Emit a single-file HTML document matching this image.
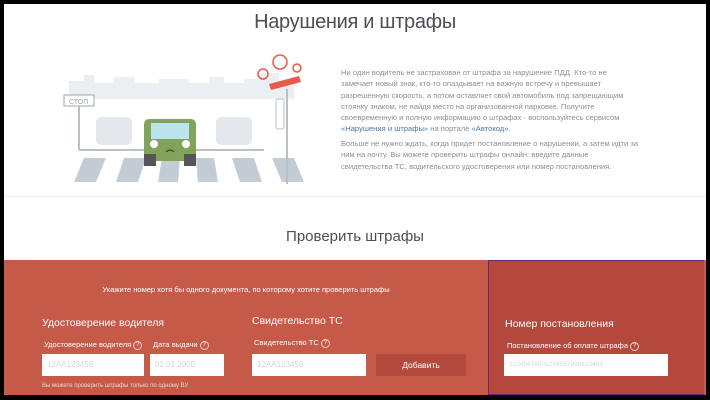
<!DOCTYPE html>
<html><head><meta charset="utf-8"><style>
body{margin:0;width:710px;height:400px;background:#000;overflow:hidden;font-family:"Liberation Sans",sans-serif;position:relative}
.page{position:absolute;left:4px;top:4px;width:702px;height:391px;background:#fff;overflow:hidden}
.a{position:absolute}
h1{position:absolute;margin:0;left:0;width:702px;top:7px;text-align:center;font-weight:normal;font-size:20px;color:#4a4e55;letter-spacing:-0.3px}
.p{position:absolute;left:337px;width:300px;font-size:7.6px;line-height:11.3px;color:#8a8f95}
.p a{color:#4b76a8}
.red{position:absolute;left:0;top:256px;width:702px;height:135px;background:#c65a49}
.rp{position:absolute;left:484px;top:256px;width:215px;height:133px;background:#b4483c;border:1.5px solid #5e2a72;border-right:none}
.w{color:#fff}
.inp{position:absolute;background:#fff;height:22px;font-size:8px;color:#d5d5d5;line-height:22px;padding-left:5px;box-sizing:border-box}
.q{display:inline-block;width:7px;height:7px;border:1px solid #f0d0c8;border-radius:50%;font-size:6px;line-height:7px;text-align:center;vertical-align:middle}
</style></head><body><div class="page">
<h1>Нарушения и штрафы</h1>
<svg class="a" style="left:50px;top:45px" width="250" height="140">
<path d="M15 32h15v-6h10v8h20v-6h20v6h25v-4h30v4h20v-6h15v6h20v-4h15v-6h20v8h15v18H15z" fill="#eceff2"/>
<rect x="10" y="46" width="30" height="11" fill="#fff" stroke="#9aa5b0"/><text x="15" y="55" font-size="7" fill="#9aa5b0">СТОП</text>
<line x1="25" y1="57" x2="25" y2="101" stroke="#b8c0c8" stroke-width="2"/>
<line x1="25" y1="101" x2="210" y2="101" stroke="#b8c0c8" stroke-width="2"/>
<rect x="42" y="68" width="36" height="28" rx="5" fill="#e4e8ec"/>
<rect x="162" y="68" width="36" height="28" rx="5" fill="#e4e8ec"/>
<g fill="#c3ccd5"><path d="M20 133l10-24h22l-10 24z"/><path d="M62 133l8-24h22l-8 24z"/><path d="M104 133l4-24h18l-2 24z"/><path d="M144 133l-2-24h18l4 24z"/><path d="M186 133l-8-24h22l8 24z"/><path d="M228 133l-10-24h22l10 24z"/></g>
<rect x="90" y="70" width="52" height="42" rx="5" fill="#82a35a"/>
<rect x="97" y="74" width="38" height="16" fill="#bde3ee"/>
<rect x="90" y="105" width="12" height="12" fill="#555"/><rect x="130" y="105" width="12" height="12" fill="#555"/>
<circle cx="100" cy="95" r="4" fill="#fff"/><circle cx="132" cy="95" r="4" fill="#fff"/>
<path d="M112 103q4-4 8 0" stroke="#333" fill="none"/>
<line x1="233" y1="40" x2="233" y2="135" stroke="#b8c0c8" stroke-width="2"/>
<rect x="222" y="50" width="8" height="30" rx="2" fill="#fff" stroke="#b8c0c8"/>
<path d="M215 35l30-8 2 6-30 8z" fill="#e85a4a"/>
<circle cx="226" cy="13" r="7" fill="none" stroke="#e85a4a" stroke-width="1.5"/>
<circle cx="209" cy="25" r="5" fill="none" stroke="#e85a4a" stroke-width="1.5"/>
<circle cx="243" cy="19" r="4" fill="none" stroke="#e85a4a" stroke-width="1.5"/>
</svg>
<div class="p" style="top:63px">Ни один водитель не застрахован от штрафа за нарушение ПДД. Кто-то не замечает новый знак, кто-то опаздывает на важную встречу и превышает разрешенную скорость, а потом оставляет свой автомобиль под запрещающим стоянку знаком, не найдя место на организованной парковке. Получите своевременную и полную информацию о штрафах - воспользуйтесь сервисом <a>«Нарушения и штрафы»</a> на портале <a>«Автокод»</a>.</div>
<div class="p" style="top:134px">Больше не нужно ждать, когда придет постановление о нарушении, а затем идти за ним на почту. Вы можете проверить штрафы онлайн: введите данные свидетельства ТС, водительского удостоверения или номер постановления.</div>
<div class="a" style="left:0;top:192px;width:702px;height:1px;background:#eee"></div>
<div class="a" style="left:0;top:224px;width:702px;text-align:center;font-size:15px;color:#4a4e55">Проверить штрафы</div>
<div class="red"></div>
<div class="rp"></div>
<div class="a w" style="left:0;width:484px;top:281px;text-align:center;font-size:7.5px">Укажите номер хотя бы одного документа, по которому хотите проверить штрафы</div>
<div class="a w" style="left:38px;top:313px;font-size:10.5px">Удостоверение водителя</div>
<div class="a w" style="left:248px;top:311px;font-size:10.5px">Свидетельство ТС</div>
<div class="a w" style="left:501px;top:314px;font-size:10.5px">Номер постановления</div>
<div class="a w" style="left:40px;top:336px;font-size:7.5px">Удостоверение водителя <span class="q">?</span></div>
<div class="a w" style="left:149px;top:336px;font-size:7.5px">Дата выдачи <span class="q">?</span></div>
<div class="a w" style="left:250px;top:334px;font-size:7.5px">Свидетельство ТС <span class="q">?</span></div>
<div class="a w" style="left:503px;top:337px;font-size:7.5px">Постановление об оплате штрафа <span class="q">?</span></div>
<div class="inp" style="left:38px;top:350px;width:102px">12AA123456</div>
<div class="inp" style="left:146px;top:350px;width:74px">01.01.2000</div>
<div class="inp" style="left:248px;top:350px;width:114px">12AA123456</div>
<div class="a w" style="left:372px;top:350px;width:90px;height:22px;background:#b24a3e;text-align:center;line-height:22px;font-size:8.5px">Добавить</div>
<div class="inp" style="left:500px;top:350px;width:164px;font-size:6.5px">12345678901234567890123451</div>
<div class="a" style="left:38px;top:379px;font-size:6px;color:#f3d5cf">Вы можете проверить штрафы только по одному ВУ</div>
</div></body></html>
